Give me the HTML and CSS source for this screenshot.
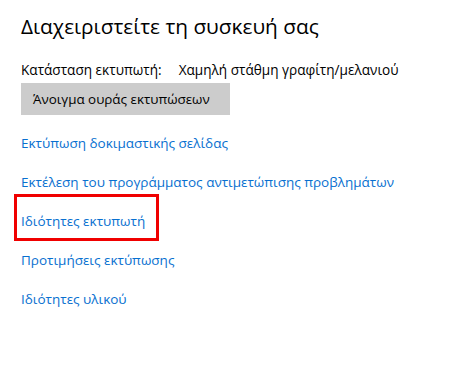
FILE: index.html
```html
<!DOCTYPE html>
<html lang="el">
<head>
<meta charset="utf-8">
<link rel="stylesheet" href="styles.css">
</head>
<body>
<main class="page">
  <h1 class="title">Διαχειριστείτε τη συσκευή σας</h1>
  <div class="status">
    <span class="status-label">Κατάσταση εκτυπωτή:</span>
    <span class="status-value">Χαμηλή στάθμη γραφίτη/μελανιού</span>
  </div>
  <button class="queue-btn">Άνοιγμα ουράς εκτυπώσεων</button>
  <nav class="links">
    <a class="link">Εκτύπωση δοκιμαστικής σελίδας</a>
    <a class="link">Εκτέλεση του προγράμματος αντιμετώπισης προβλημάτων</a>
    <a class="link"><span class="highlight">Ιδιότητες εκτυπωτή</span></a>
    <a class="link">Προτιμήσεις εκτύπωσης</a>
    <a class="link">Ιδιότητες υλικού</a>
  </nav>
</main>
</body>
</html>
```
FILE: styles.css
```css
html, body {
  margin: 0;
  padding: 0;
  background: #ffffff;
}
body {
  font-family: "Open Sans", "Noto Sans", sans-serif;
  color: #000000;
  width: 469px;
  height: 378px;
  overflow: hidden;
}
.page {
  padding: 13px 0 0 21px;
  display: flex;
  flex-direction: column;
  align-items: flex-start;
}
.title {
  margin: 0;
  font-size: 20.8px;
  font-weight: 400;
  line-height: 26px;
}
.status {
  margin-top: 22px;
  display: flex;
  gap: 17px;
  font-size: 13.6px;
  line-height: 18px;
}
.queue-btn {
  margin-top: 4px;
  width: 209px;
  height: 32px;
  border: none;
  background: #cccccc;
  font-family: inherit;
  font-size: 13.4px;
  color: #000;
  text-align: left;
  padding: 0 0 0 12px;
}
.links {
  margin-top: 19px;
  display: flex;
  flex-direction: column;
  align-items: flex-start;
  gap: 21px;
}
.link {
  font-size: 13.5px;
  line-height: 18px;
  color: #0870d0;
  text-decoration: none;
}
.highlight {
  position: relative;
}
.highlight::after {
  content: "";
  position: absolute;
  left: -7px;
  top: -18px;
  width: 139px;
  height: 41px;
  border: 3px solid #f00000;
}
```
